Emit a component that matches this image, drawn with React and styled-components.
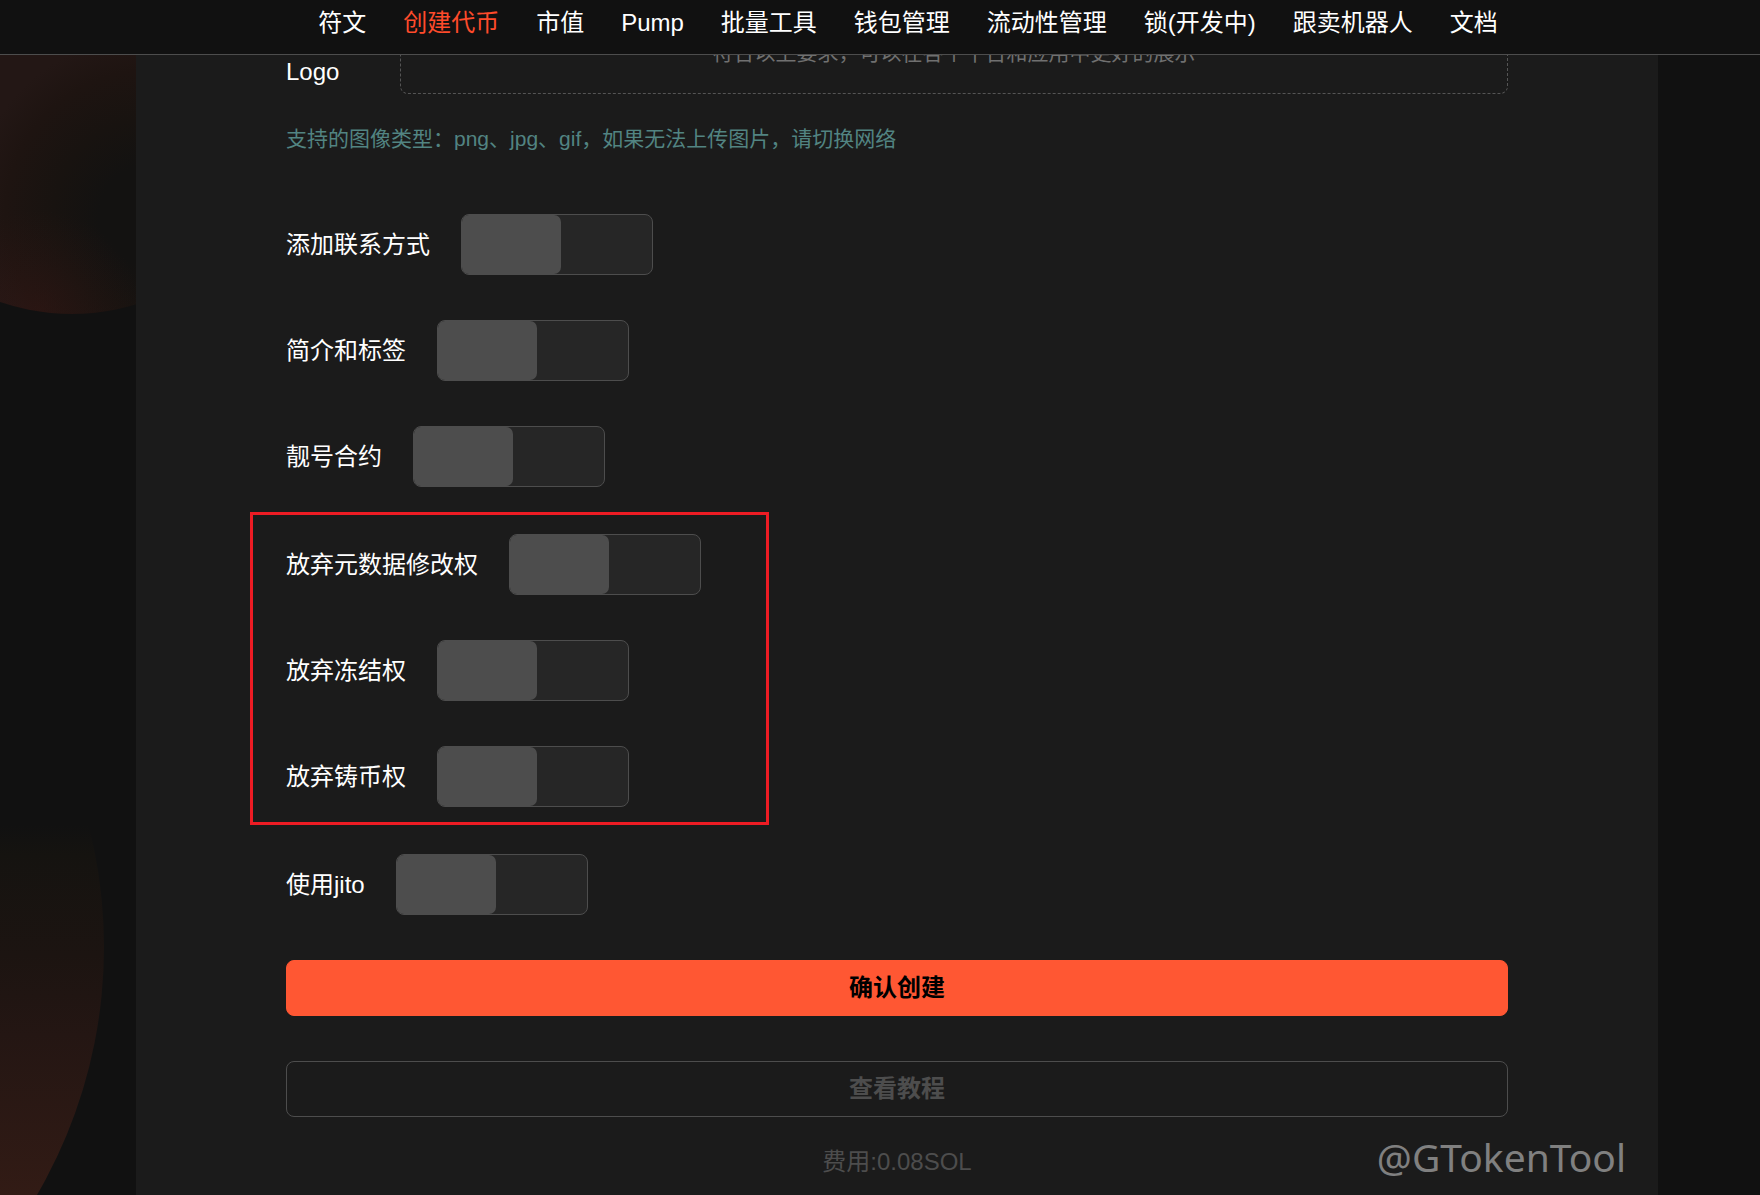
import React from "react";
import styled, { createGlobalStyle } from "styled-components";

const GlobalStyle = createGlobalStyle`
  *, *::before, *::after { box-sizing: border-box; }
  body {
    margin: 0;
    background: #111111;
    color: #ffffff;
    font-family: "Liberation Sans", "Noto Sans CJK SC", sans-serif;
    font-size: 24px;
    line-height: 32px;
  }
  button, input { font: inherit; margin: 0; }
`;

const Page = styled.div`
  position: relative;
  display: flex;
  flex-direction: column;
  min-height: 100vh;
  overflow: hidden;
`;

const TopGlow = styled.div`
  position: absolute;
  top: -130px;
  left: -150px;
  width: 444px;
  height: 444px;
  border-radius: 50%;
  background:
    radial-gradient(circle at 190px 440px, rgba(70, 25, 22, 0.28), rgba(70, 25, 22, 0) 100px),
    radial-gradient(
      circle at 300px 345px,
      #131211 50px,
      #181310 96px,
      #1e1411 145px,
      #231715 180px
    );
`;

const BottomGlow = styled.div`
  position: absolute;
  top: 455px;
  left: -880px;
  width: 984px;
  height: 984px;
  border-radius: 50%;
  background: linear-gradient(
    to bottom,
    #111111 370px,
    #151310 400px,
    #1c1411 500px,
    #241613 580px,
    #321b15 740px
  );
`;

const Header = styled.header`
  position: fixed;
  top: 0;
  left: 0;
  right: 0;
  z-index: 10;
  padding: 7px 0 15px 56px;
  background: #111111;
  border-bottom: 1px solid #4d4d4d;
`;

const Nav = styled.nav`
  display: flex;
  justify-content: center;
  gap: 37px;
`;

const NavLink = styled.a`
  color: ${(p) => (p.$active ? "#ff4b2b" : "#ffffff")};
  text-decoration: none;
  white-space: nowrap;
`;

const Panel = styled.main`
  position: relative;
  flex: 1;
  margin: 0 102px 0 136px;
  padding: 0 150px 16px;
  background: #1b1b1b;
`;

const Form = styled.form`
  display: flex;
  flex-direction: column;
`;

const UploadRow = styled.div`
  display: grid;
  grid-template-columns: 114px 1fr;
  align-items: end;
`;

const UploadLabel = styled.span`
  padding-bottom: 6px;
`;

const DropZone = styled.button`
  display: flex;
  flex-direction: column;
  justify-content: flex-end;
  align-items: center;
  height: 94px;
  padding: 0 24px 24px;
  border: 1px dashed #555555;
  border-radius: 8px;
  background: transparent;
  color: #707070;
  font-size: 21px;
`;

const Hint = styled.p`
  margin: 29px 0 59px;
  color: #528482;
  font-size: 21px;
`;

const Groups = styled.div`
  display: flex;
  flex-direction: column;
  gap: 47px;
`;

const Group = styled.div`
  position: relative;
  display: flex;
  flex-direction: column;
  align-items: flex-start;
  gap: 45px;

  ${(p) =>
    p.$marked &&
    `&::after {
      content: "";
      position: absolute;
      top: -22px;
      bottom: -18px;
      left: -36px;
      width: 519px;
      border: 3px solid #ed1c24;
      pointer-events: none;
    }`}
`;

const SwitchRow = styled.label`
  display: flex;
  align-items: center;
  gap: 31px;
`;

const Switch = styled.input`
  appearance: none;
  width: 192px;
  height: 61px;
  border: 1px solid #4d4d4d;
  border-radius: 8px;
  background: #262626;
  cursor: pointer;

  &::before {
    content: "";
    display: block;
    width: 99px;
    height: 100%;
    border-radius: 7px;
    background: #4d4d4d;
  }

  &:checked::before {
    margin-left: auto;
    background: #ff5733;
  }
`;

const Actions = styled.div`
  display: flex;
  flex-direction: column;
  gap: 45px;
  margin-top: 45px;
`;

const Button = styled.button`
  height: 56px;
  border: 1px solid ${(p) => (p.$primary ? "#ff5733" : "#4d4d4d")};
  border-radius: 8px;
  background: ${(p) => (p.$primary ? "#ff5733" : "transparent")};
  color: ${(p) => (p.$primary ? "#000000" : "#4d4d4d")};
  font-weight: 700;
  cursor: pointer;
`;

const Fee = styled.p`
  margin: 29px 0 0;
  color: #4d4d4d;
  text-align: center;
`;

const Watermark = styled.span`
  position: absolute;
  right: 32px;
  bottom: 14px;
  color: #808080;
  font-family: "Noto Sans", sans-serif;
  font-size: 39px;
  line-height: 48px;
`;

const NAV_ITEMS = [
  "符文",
  "创建代币",
  "市值",
  "Pump",
  "批量工具",
  "钱包管理",
  "流动性管理",
  "锁(开发中)",
  "跟卖机器人",
  "文档",
];

const SWITCH_GROUPS = [
  { items: ["添加联系方式", "简介和标签", "靓号合约"] },
  { marked: true, items: ["放弃元数据修改权", "放弃冻结权", "放弃铸币权"] },
  { items: ["使用jito"] },
];

export default function App() {
  return (
    <Page>
      <GlobalStyle />
      <TopGlow aria-hidden="true" />
      <BottomGlow aria-hidden="true" />
      <Header>
        <Nav>
          {NAV_ITEMS.map((item) => (
            <NavLink key={item} href="#" $active={item === "创建代币"}>
              {item}
            </NavLink>
          ))}
        </Nav>
      </Header>
      <Panel>
        <Form onSubmit={(e) => e.preventDefault()}>
          <UploadRow>
            <UploadLabel id="logo-label">Logo</UploadLabel>
            <DropZone type="button" aria-labelledby="logo-label">
              符合以上要求，可以在各个平台和应用中更好的展示
            </DropZone>
          </UploadRow>
          <Hint>支持的图像类型：png、jpg、gif，如果无法上传图片，请切换网络</Hint>
          <Groups>
            {SWITCH_GROUPS.map((group) => (
              <Group key={group.items[0]} $marked={group.marked}>
                {group.items.map((item) => (
                  <SwitchRow key={item}>
                    {item}
                    <Switch type="checkbox" role="switch" />
                  </SwitchRow>
                ))}
              </Group>
            ))}
          </Groups>
          <Actions>
            <Button type="submit" $primary>
              确认创建
            </Button>
            <Button type="button">查看教程</Button>
          </Actions>
          <Fee>费用:0.08SOL</Fee>
        </Form>
        <Watermark>@GTokenTool</Watermark>
      </Panel>
    </Page>
  );
}
